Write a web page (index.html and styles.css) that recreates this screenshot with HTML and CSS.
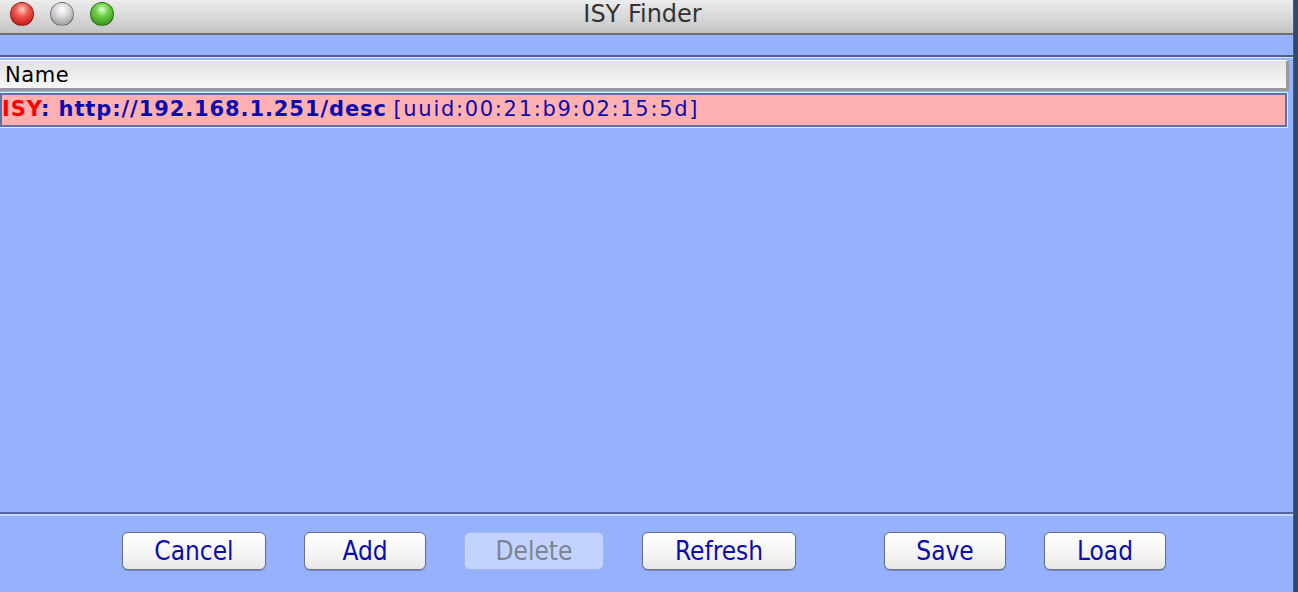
FILE: index.html
```html
<!DOCTYPE html>
<html>
  <head>
    <meta charset="UTF-8" />
    <title>ISY Finder</title>
    <link rel="stylesheet" href="styles.css">
  </head>
  <body>
    <div class="window">
      <div class="titlebar">
        <div class="lights">
          <span class="light red"></span>
          <span class="light grey"></span>
          <span class="light green"></span>
        </div>
        <div class="title">ISY Finder</div>
        <div></div>
      </div>
      <div class="content">
        <div class="topgap"></div>
        <div class="table">
          <div class="thead">Name</div>
          <div class="row">
            <span class="isy">ISY</span><b class="url">: http://192.168.1.251/desc</b>
            <span class="uuid">[uuid:00:21:b9:02:15:5d]</span>
          </div>
        </div>
        <div class="buttons">
          <button class="btn w144">Cancel</button>
          <button class="btn w122">Add</button>
          <button class="btn w140" disabled>Delete</button>
          <button class="btn w154">Refresh</button>
          <button class="btn w122 save">Save</button>
          <button class="btn w122">Load</button>
        </div>
      </div>
    </div>
  </body>
</html>
```

FILE: styles.css
```css
* {
  box-sizing: border-box;
  margin: 0;
  padding: 0;
}

body {
  background: #2f4a6c;
  font-family: "DejaVu Sans", Verdana, sans-serif;
  height: 592px;
  overflow: hidden;
}

.window {
  width: 1294px;
  height: 592px;
  display: flex;
  flex-direction: column;
  border-right: 1px solid #3e5f8a;
}

/* title bar */
.titlebar {
  height: 35px;
  display: grid;
  grid-template-columns: 1fr auto 1fr;
  align-items: center;
  background: linear-gradient(#ececec, #d9d9d9 50%, #c3c3c3);
  border-bottom: 2px solid #6f6f6f;
}

.lights {
  display: flex;
  gap: 16px;
  padding-left: 10px;
  padding-bottom: 6px;
}

.light {
  width: 24px;
  height: 24px;
  border-radius: 50%;
  border: 1px solid rgba(0, 0, 0, 0.35);
}

.red {
  background: radial-gradient(circle at 50% 30%, #ffd0c8 0, #f05a50 35%, #c8201a 80%, #a01010);
}

.grey {
  background: radial-gradient(circle at 50% 30%, #ffffff 0, #d6d6d6 40%, #9c9c9c 85%);
}

.green {
  background: radial-gradient(circle at 50% 30%, #e0ffd0 0, #6fcf48 35%, #3c9a22 80%, #2a7a18);
}

.title {
  font-size: 24px;
  color: #333;
  padding-bottom: 5px;
  padding-right: 8px;
}

/* content */
.content {
  flex: 1;
  display: flex;
  flex-direction: column;
  background: #96b2fd;
}

.topgap {
  height: 22px;
  border-bottom: 2px solid #4d5d8a;
}

.table {
  flex: 1;
  padding-top: 2px;
  padding-right: 4px;
  border-top: 1px solid #dfe6ff;
  border-bottom: 2px solid #55679c;
}

.thead {
  height: 31px;
  padding-left: 5px;
  font-size: 21px;
  letter-spacing: 0.6px;
  line-height: 28px;
  color: #000;
  background: linear-gradient(#e2e2e2, #f8f8f8);
  border-top: 1px solid #ffffff;
  border-bottom: 3px solid #9a9a9a;
  border-right: 3px solid #9a9a9a;
}

.row {
  margin-top: 2px;
  margin-right: 2px;
  height: 34px;
  font-size: 21px;
  line-height: 28px;
  white-space: nowrap;
  color: #0b0bb0;
  background: #ffb0b0;
  border: 2px solid #5d71a8;
  outline: 1px solid #c8f4ff;
}

.isy {
  color: #ff0000;
  font-weight: bold;
  letter-spacing: 0.9px;
}

.url {
  letter-spacing: 0.9px;
}

.uuid {
  letter-spacing: 1.7px;
}

/* buttons */
.buttons {
  height: 78px;
  display: flex;
  align-items: center;
  gap: 38px;
  padding-left: 122px;
  padding-bottom: 6px;
  border-top: 2px solid #c6d5ff;
}

.btn {
  height: 38px;
  font-family: "DejaVu Sans Condensed", "DejaVu Sans", sans-serif;
  font-stretch: condensed;
  font-size: 26px;
  color: #0b0bb0;
  background: linear-gradient(#ffffff, #f6f6f6 50%, #e8e8e8);
  border: 1px solid #6a6f82;
  border-radius: 6px;
  box-shadow: 0 1px 1px rgba(40, 50, 90, 0.3);
}

.btn:disabled {
  color: #7e8490;
  background: #c3d3fd;
  border-color: #a6b6e0;
  box-shadow: none;
}

.save {
  margin-left: 50px;
}

.w122 { width: 122px; }
.w140 { width: 140px; }
.w144 { width: 144px; }
.w154 { width: 154px; }
```
